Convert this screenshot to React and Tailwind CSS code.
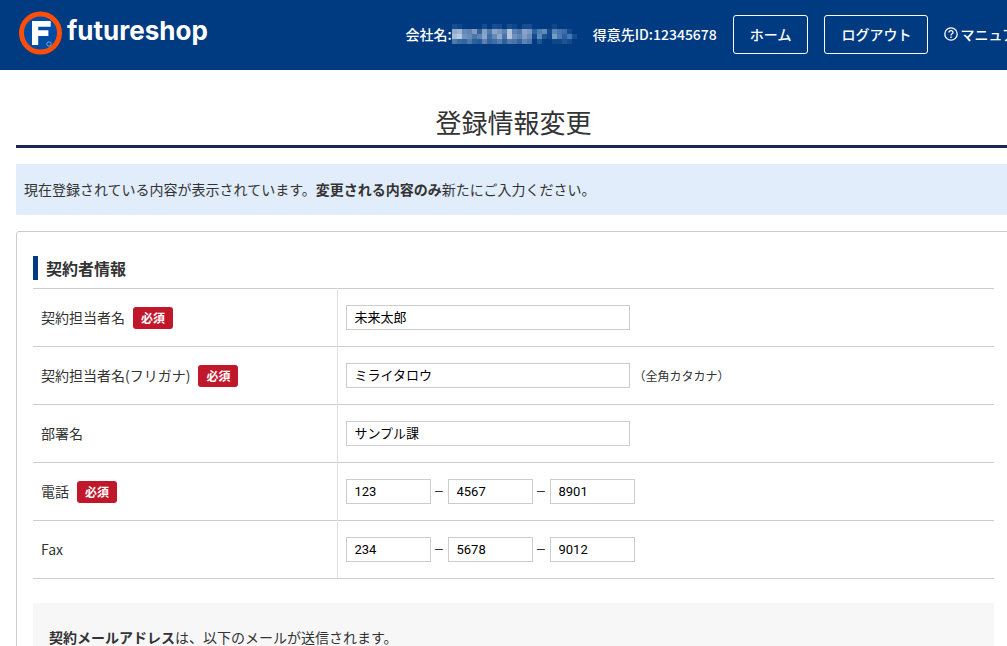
import React from "react";

const MOSAIC = [
  "#1d5292 #114a8c #003a80 #003a80 #003a80 #003a80 #1a5092 #003a80 #1d5292 #1a5092 #003a80 #1d5292 #114a8c #003a80 #1a5092 #1d5292 #003a80 #003a80 #003a80 #003a80 #114a8c #003a80 #003a80 #003a80 #003a80",
  "#a8c0d8 #b8cce0 #7898c0 #7090bc #a0a8c8 #3c6ca4 #9cb4d0 #6088b8 #a8b8d4 #90a8cc #6c90bc #d0dcec #7090c0 #5c84b4 #a8b4d4 #90a8cc #3468a4 #5c8cbc #7898c0 #1a5092 #6c94c0 #5480b8 #4878b4 #1a5092 #003a80",
  "#c0d4e4 #d8e4ec #84a4c8 #7898c4 #5880b0 #6c90bc #a4bcd8 #4878ac #7898c4 #a8bcd8 #5480b4 #d8dcec #88a0c8 #6c90bc #98acd0 #7c9cc8 #1a5092 #6c98c0 #245898 #114a8c #88b0d0 #5c84b8 #3464b0 #5484b8 #1d5292",
  "#5c84b4 #4474a8 #3c6ca4 #5c84b4 #34689c #2c60a0 #6c8cbc #3c6ca4 #4878ac #6488b8 #3468a0 #5c84b4 #5480b0 #3c6ca4 #6c90bc #5c80b4 #003a80 #245898 #003a80 #003a80 #114a8c #114a8c #245898 #1a5092 #003a80",
].map((row) => row.split(" "));

const FIELD = "h-[25px] border border-[#ccc] bg-white px-2 pb-0.5 text-[13px] text-black";

function Logo() {
  return (
    <a href="#top" aria-label="futureshop" className="flex shrink-0 items-center gap-1 pb-0.5 text-white">
      <svg width="44" height="46" viewBox="0 0 44 46" aria-hidden="true">
        <circle cx="21.500" cy="23" r="19" fill="#004ca4" stroke="#ff4e0a" strokeWidth="5" />
        <path d="M13 11H31.700V16.700H19.200V20.200H29.400V25.900H19.200V35H13Z" fill="#fff" />
        <circle cx="30" cy="34" r="2.200" fill="none" stroke="#7ea6d6" strokeWidth="1" />
      </svg>
      <span className="pb-1 font-['Inter',sans-serif] text-[26px] leading-8 font-bold">futureshop</span>
    </a>
  );
}

function HeaderButton({ children }) {
  return (
    <button type="button" className="ml-4 h-[39px] shrink-0 rounded-[3px] border border-white px-4 text-sm font-medium">
      {children}
    </button>
  );
}

function Required() {
  return (
    <span className="ml-2 inline-block rounded-[3px] bg-[#c0182a] px-2 text-xs leading-[22px] font-bold text-white">必須</span>
  );
}

function Row({ label, htmlFor, required, children }) {
  return (
    <tr className="h-[58px] border-b border-[#ccc]">
      <th scope="row" className="w-[304px] border-r border-[#e0e0e0] px-2 text-left font-normal">
        <label htmlFor={htmlFor} className="flex items-center">
          <span className="pb-0.5">{label}</span>
          {required && <Required />}
        </label>
      </th>
      <td className="px-2">{children}</td>
    </tr>
  );
}

function Phone({ id, label, parts }) {
  return (
    <div className="flex items-center">
      {parts.map((part, i) => (
        <React.Fragment key={part}>
          {i > 0 && <span className="w-[17px] pb-1 text-center font-['Liberation_Sans',sans-serif] leading-5">–</span>}
          <input
            id={i === 0 ? id : undefined}
            aria-label={label + (i + 1)}
            defaultValue={part}
            className="h-[25px] w-[85px] border border-[#ccc] bg-white px-2 font-['Roboto',sans-serif] text-[13px] text-black"
          />
        </React.Fragment>
      ))}
    </div>
  );
}

export default function App() {
  return (
    <div id="top" className="h-screen overflow-hidden bg-white font-['Noto_Sans_CJK_JP',sans-serif] text-sm text-[#333]">
      <header className="flex h-[70px] items-center bg-[#003a80] pb-0.5 pl-[19px] text-white">
        <Logo />
        <div className="-mr-[23px] ml-auto flex shrink-0 items-center font-medium whitespace-nowrap">
          <span className="flex items-center">
            会社名:
            <svg width="125" height="20" viewBox="0 0 125 20" shapeRendering="crispEdges" aria-hidden="true">
              <g opacity="0.85">
                {MOSAIC.map((row, y) =>
                  row.map((c, x) => <rect key={x + "-" + y} x={x * 5} y={y * 5} width="5" height="5" fill={c} />)
                )}
              </g>
            </svg>
          </span>
          <span className="ml-4">得意先ID:12345678</span>
          <HeaderButton>ホーム</HeaderButton>
          <HeaderButton>ログアウト</HeaderButton>
          <a href="#manual" className="ml-4 flex items-center gap-0.5">
            <svg width="14" height="14" viewBox="0 0 14 14" fill="none" stroke="#fff" strokeWidth="1.300" aria-hidden="true">
              <circle cx="7" cy="7" r="6.200" />
              <path d="M5 5.600C5 3 9 3 9 5.400C9 6.800 7 6.800 7 8.500M7 9.600V10.900" />
            </svg>
            マニュアル
          </a>
        </div>
      </header>

      <main className="-mr-1 ml-4">
        <h1 className="mt-8 border-b-[3px] border-[#1a2654] pb-[3px] text-center text-[26px] leading-10">登録情報変更</h1>
        <p className="mt-4 bg-[#e1edfb] px-2 py-[15px] leading-[21px]">
          現在登録されている内容が表示されています。<strong>変更される内容のみ</strong>新たにご入力ください。
        </p>
        <section className="mt-4 rounded-[3px] border border-[#ccc] px-4 pt-6">
          <h2 className="border-l-[5px] border-[#003a80] pl-2 text-base leading-6 font-bold">契約者情報</h2>
          <table className="mt-2 w-full border-collapse border-t border-[#ccc]">
            <tbody>
              <Row label="契約担当者名" htmlFor="name" required>
                <input id="name" defaultValue="未来太郎" className={FIELD + " w-[284px]"} />
              </Row>
              <Row label="契約担当者名(フリガナ)" htmlFor="kana" required>
                <div className="flex items-center gap-1">
                  <input id="kana" defaultValue="ミライタロウ" className={FIELD + " w-[284px]"} />
                  <span className="text-xs">（全角カタカナ）</span>
                </div>
              </Row>
              <Row label="部署名" htmlFor="dept">
                <input id="dept" defaultValue="サンプル課" className={FIELD + " w-[284px]"} />
              </Row>
              <Row label="電話" htmlFor="tel" required>
                <Phone id="tel" label="電話" parts={["123", "4567", "8901"]} />
              </Row>
              <Row label="Fax" htmlFor="fax">
                <Phone id="fax" label="Fax" parts={["234", "5678", "9012"]} />
              </Row>
            </tbody>
          </table>
          <div className="mt-6 bg-[#f7f7f7] px-4 py-6 leading-[21px]">
            <p>
              <strong>契約メールアドレス</strong>は、以下のメールが送信されます。
            </p>
          </div>
        </section>
      </main>
    </div>
  );
}
